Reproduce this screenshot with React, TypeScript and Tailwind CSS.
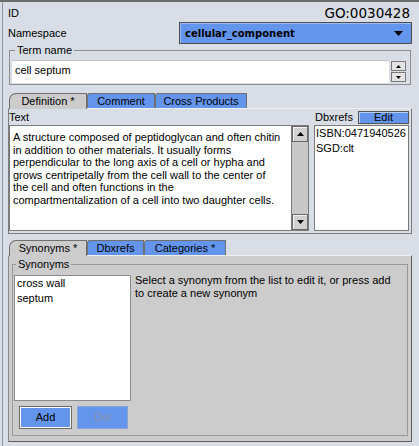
import React from "react";

// OBO term editor panel (Swing / Metal look)

function Tri({ dir, w = 7, h = 4 }: { dir: "up" | "down"; w?: number; h?: number }) {
  const pts = dir === "up" ? `0,${h} ${w / 2},0 ${w},${h}` : `0,0 ${w},0 ${w / 2},${h}`;
  return (
    <svg width={w} height={h} viewBox={`0 0 ${w} ${h}`} className="block">
      <polygon points={pts} fill="#000" />
    </svg>
  );
}

function Tabs({ tabs }: { tabs: { label: string; w: string; active?: boolean; first?: boolean }[] }) {
  return (
    <div className="flex h-[15px] items-end pl-[1px]">
      {tabs.map((t) => (
        <div
          key={t.label}
          className={
            "h-[15px] shrink-0 border-l border-r border-t border-[#6f6f6f] pt-[1px] text-center " +
            t.w +
            (t.first ? " rounded-tl-[7px]" : " rounded-tl-[3px]") +
            (t.active ? " relative z-10 -mb-px h-[16px] bg-[#cccccc]" : " bg-[#6495ed]")
          }
        >
          {t.label}
        </div>
      ))}
    </div>
  );
}

function ScrollBtn({ dir }: { dir: "up" | "down" }) {
  return (
    <div className="flex h-[16px] items-center justify-center border border-[#6a6a6a] bg-[#d0d0d0] shadow-[inset_1px_1px_0_#f2f2f2]">
      <Tri dir={dir} />
    </div>
  );
}

const definition = [
  "A structure composed of peptidoglycan and often chitin",
  "in addition to other materials. It usually forms",
  "perpendicular to the long axis of a cell or hypha and",
  "grows centripetally from the cell wall to the center of",
  "the cell and often functions in the",
  "compartmentalization of a cell into two daughter cells.",
];

export default function App() {
  return (
    <div className="h-[446px] w-[419px] overflow-hidden border-t-2 border-[#6b6b6b] bg-[#d9dee6] font-['Liberation_Sans',Arial,sans-serif] text-[11px] leading-[13px] text-black">
      <div className="ml-[2px] h-full border-l border-[#8e939a] pl-[5px] pr-[7px]">
        {/* ===== ID ===== */}
        <div className="flex h-[20px] items-start justify-between">
          <span className="mt-[5px]">ID</span>
          <span className="mr-[2px] mt-[3px] font-['DejaVu_Sans',sans-serif] text-[13.5px] leading-[16px]">
            GO:0030428
          </span>
        </div>

        {/* ===== Namespace ===== */}
        <div className="flex h-[22px] items-center justify-between">
          <span>Namespace</span>
          <div className="flex h-[22px] w-[233px] items-center justify-between border border-[#4d4d4d] bg-[#6495ed] pl-[5px] pr-[8px] shadow-[inset_1px_1px_0_#9dbaf2]">
            <span className="font-['DejaVu_Sans',sans-serif] text-[10px] font-bold">cellular_component</span>
            <Tri dir="down" w={9} h={5} />
          </div>
        </div>

        {/* ===== Term name ===== */}
        <fieldset className="mx-[1px] border border-[#8f8f8f] px-[2px] pb-[1px] pt-[3px]">
          <legend className="ml-[3px] px-[2px] leading-[13px]">Term name</legend>
          <div className="flex gap-[2px]">
            <div className="h-[23px] flex-1 border-t border-[#c4c4c4] bg-white pl-[3px] pt-[3px]">cell septum</div>
            <div className="mr-[2px] mt-[1px] flex w-[15px] flex-col gap-[1px]">
              <div className="flex h-[10px] items-center justify-center border border-[#7a7a7a] bg-[#e4e4e4]">
                <Tri dir="up" w={5} h={3} />
              </div>
              <div className="flex h-[10px] items-center justify-center border border-[#7a7a7a] bg-[#e4e4e4]">
                <Tri dir="down" w={5} h={3} />
              </div>
            </div>
          </div>
        </fieldset>

        {/* ===== Definition tabs ===== */}
        <div className="mt-[8px]">
          <Tabs
            tabs={[
              { label: "Definition *", w: "w-[78px]", active: true, first: true },
              { label: "Comment", w: "w-[68px]" },
              { label: "Cross Products", w: "w-[92px]" },
            ]}
          />
          <div className="flex h-[126px] gap-[5px] border border-[#7d7d7d] border-t-[#eeeeee] pb-[2px] pr-[2px]">
            <div className="flex w-[300px] flex-col">
              <div className="h-[16px] pt-[2px]">Text</div>
              <div className="flex h-[106px]">
                <div className="w-[283px] whitespace-nowrap border border-[#7a7a7a] bg-white pl-[3px] pt-[5px] leading-[12.5px]">
                  {definition.map((l) => (
                    <div key={l}>{l}</div>
                  ))}
                </div>
                <div className="flex w-[17px] flex-col justify-between border-y border-r border-[#7a7a7a] bg-[#c8c8c8]">
                  <ScrollBtn dir="up" />
                  <ScrollBtn dir="down" />
                </div>
              </div>
            </div>
            <div className="flex w-[95px] flex-col">
              <div className="flex h-[16px] items-start justify-between">
                <span className="pl-[1px] pt-[2px]">Dbxrefs</span>
                <button className="mt-[2px] h-[13px] w-[51px] border border-[#555] bg-[#6495ed] text-center leading-[11px] shadow-[inset_1px_1px_0_#b8cdf6]">
                  Edit
                </button>
              </div>
              <div className="h-[106px] border border-[#7a7a7a] bg-white pl-[1px] leading-[15px]">
                <div>ISBN:0471940526</div>
                <div>SGD:clt</div>
              </div>
            </div>
          </div>
        </div>

        {/* ===== Synonyms tabs ===== */}
        <div className="mt-[6px]">
          <Tabs
            tabs={[
              { label: "Synonyms *", w: "w-[78px]", active: true, first: true },
              { label: "Dbxrefs", w: "w-[57px]" },
              { label: "Categories *", w: "w-[82px]" },
            ]}
          />
          <div className="h-[187px] border border-[#5e5e5e] border-l-[#8a8a8a] border-t-[#eeeeee] bg-[#cccccc] pt-[2px]">
            <fieldset className="ml-[3px] mr-[3px] border border-[#999999] pb-[6px] pl-[1px] pt-[4px]">
              <legend className="ml-[2px] px-[2px] leading-[13px]">Synonyms</legend>
              <div className="flex">
                <div className="h-[126px] w-[117px] shrink-0 border border-[#8a8a8a] bg-white pl-[2px] leading-[15px]">
                  <div>cross wall</div>
                  <div>septum</div>
                </div>
                <p className="-mt-[1px] ml-[4px] leading-[13.4px]">
                  Select a synonym from the list to edit it, or press add
                  <br />
                  to create a new synonym
                </p>
              </div>
              <div className="mt-[5px] flex gap-[5px] pl-[5px]">
                <button className="h-[23px] w-[53px] border border-[#6a6a6a] bg-[#6495ed] shadow-[inset_0_0_0_1px_#ffffff]">
                  Add
                </button>
                <button className="h-[23px] w-[51px] border border-[#8ea4cf] bg-[#6495ed] text-[#8a90a8]">
                  Del
                </button>
              </div>
            </fieldset>
          </div>
        </div>
      </div>
    </div>
  );
}
